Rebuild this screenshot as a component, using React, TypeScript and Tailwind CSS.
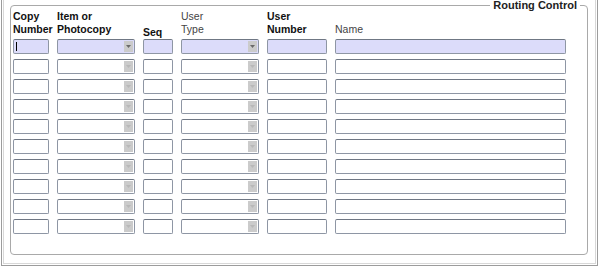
import React from "react";

const font = { fontFamily: '"Liberation Sans", Arial, sans-serif' };

const TextBox = ({ w, active, caret }: { w: string; active?: boolean; caret?: boolean }) => (
  <div
    className={`relative h-[15px] ${w} rounded-[2px] border border-[#8e96a4] border-t-[#6f7784] ${
      active ? "bg-[#dcdcfa]" : "bg-white"
    }`}
  >
    {caret && <span className="absolute left-[2px] top-[2px] h-[9px] w-[1px] bg-black" />}
  </div>
);

const Combo = ({ active }: { active?: boolean }) => (
  <div
    className={`flex h-[15px] w-[78px] rounded-[2px] border border-[#8e96a4] border-t-[#6f7784] ${
      active ? "bg-[#dcdcfa]" : "bg-white"
    }`}
  >
    <div className="flex-1" />
    <div className="my-[1px] mr-[1px] flex w-[9px] items-center justify-center bg-[#cbcbcb]">
      <svg width="5" height="3" viewBox="0 0 5 3">
        <path d="M0 0h5L2.5 3z" fill={active ? "#6a6a6a" : "#b8b8b8"} />
      </svg>
    </div>
  </div>
);

const Row = ({ first }: { first?: boolean }) => (
  <div className="flex items-center">
    <TextBox w="w-[36px]" active={first} caret={first} />
    <div className="ml-[8px]">
      <Combo active={first} />
    </div>
    <div className="ml-[8px]">
      <TextBox w="w-[30px]" active={first} />
    </div>
    <div className="ml-[8px]">
      <Combo active={first} />
    </div>
    <div className="ml-[8px]">
      <TextBox w="w-[60px]" active={first} />
    </div>
    <div className="ml-[8px]">
      <TextBox w="w-[231px]" active={first} />
    </div>
  </div>
);

export default function App() {
  return (
    <div className="h-[269px] w-[600px] overflow-hidden bg-white" style={font}>
      <div className="ml-[1px] mr-[2px] h-[266px] border-x border-b border-[#9c9c9c] pb-[1px] px-[1px]">
        <div className="h-full border-x border-b border-[#d8d8d8] pl-[6px] pr-[7px] pt-[5px]">
          <div className="relative h-[250px] rounded-[4px] border border-[#a9a9a9] pl-[2px] pt-[5px]">
            <span className="absolute right-[7px] top-[-7px] bg-white px-[3px] text-[11px] font-bold leading-[12px] text-[#222]">
              Routing Control
            </span>
            <div className="flex h-[27px] items-end pb-[2px] text-[10.5px] leading-[13px]">
              <div className="w-[44px] font-bold text-[#111]">
                Copy
                <br />
                Number
              </div>
              <div className="w-[86px] font-bold text-[#111]">
                Item or
                <br />
                Photocopy
              </div>
              <div className="w-[38px] translate-y-[3px] font-bold text-[#111]">Seq</div>
              <div className="w-[86px] text-[#444]">
                User
                <br />
                Type
              </div>
              <div className="w-[68px] font-bold text-[#111]">
                User
                <br />
                Number
              </div>
              <div className="text-[#444]">Name</div>
            </div>
            <div className="mt-[1px] flex flex-col gap-[5px]">
              <Row first />
              {Array.from({ length: 9 }).map((_, i) => (
                <Row key={i} />
              ))}
            </div>
          </div>
        </div>
      </div>
    </div>
  );
}
